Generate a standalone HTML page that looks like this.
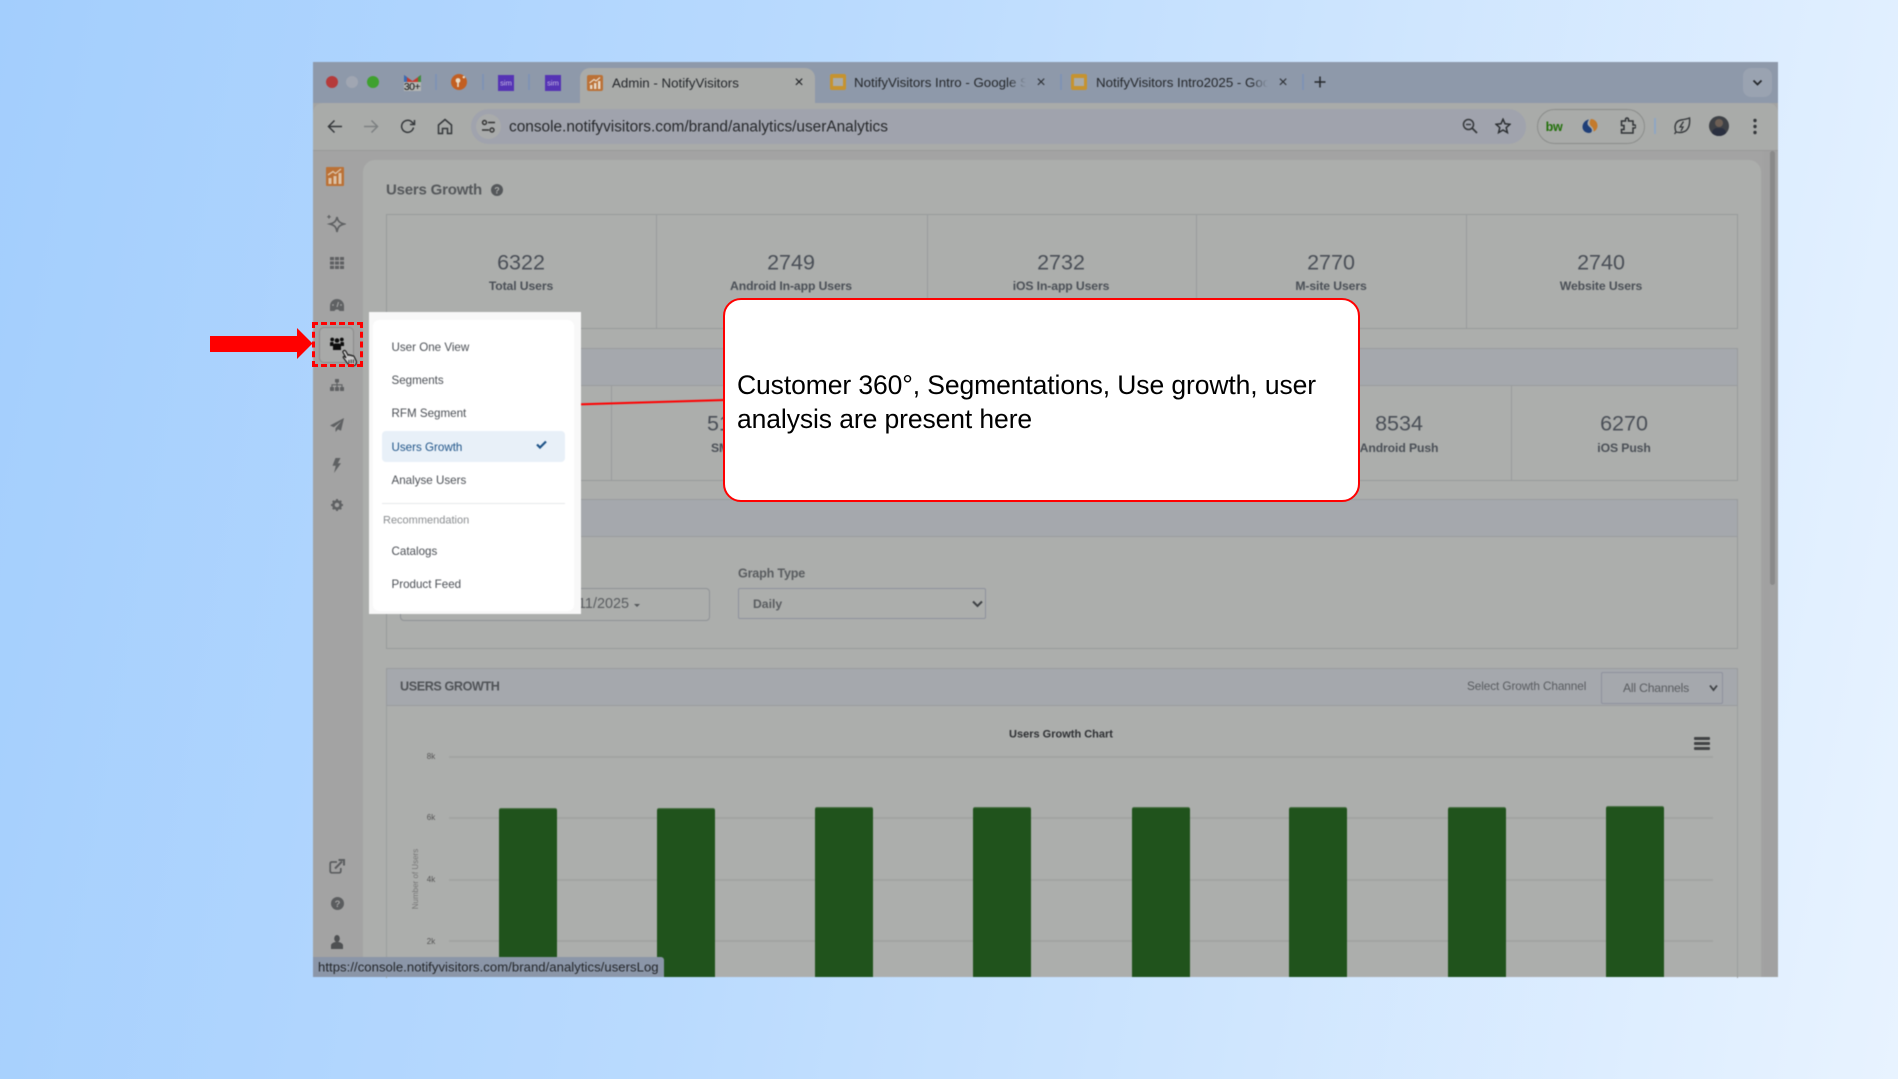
<!DOCTYPE html>
<html lang="en">
<head>
<meta charset="utf-8">
<title>Admin - NotifyVisitors</title>
<style>
html,body{margin:0;padding:0}
body{width:1898px;height:1079px;overflow:hidden;position:relative;background:linear-gradient(100deg,#a3cefd 0%,#b9dafe 40%,#e8f3ff 100%);font-family:"Liberation Sans",sans-serif}
.a{position:absolute}
.t{position:absolute;white-space:nowrap;line-height:1;margin-top:1px}
.c{transform:translate(-50%,-50%)}
.l{transform:translateY(-50%)}
.n{font-size:21.5px;color:#4a4f57}
.s{font-size:12.2px;font-weight:bold;color:#4b5057;letter-spacing:-.1px}
.vl{position:absolute;width:1px;background:#999c9c}
.band{position:absolute;background:#a5a8ad;border:1px solid #999c9f;box-sizing:border-box;border-radius:2px 2px 0 0}
.box{position:absolute;border:1px solid #989b9b;box-sizing:border-box}
.grid{position:absolute;left:449px;width:1264px;height:2px;background:#a2a4a2}
.bar{position:absolute;top:809px;width:58px;height:168px;background:#20531c;border-radius:2px 2px 0 0;box-shadow:0 -1px 0 #4d7349}
.yl{font-size:8px;color:#555}
.mi{font-size:11.6px;color:#4b4f55;left:391.5px}
.sep{position:absolute;width:2px;height:16px;top:74px;background:#7f93b5}
.tt{font-size:13.3px;color:#24272b}
.fv{position:absolute;width:16px;height:16px;top:74px;background:#c6932f;border-radius:2px}
.fv:after{content:"";position:absolute;left:3px;top:4px;width:10px;height:8px;background:#a9aba9}
#soft{position:absolute;left:0;top:0;width:1898px;height:1079px;filter:blur(.45px)}
</style>
</head>
<body>
<div id="soft">
<!-- browser window -->
<div class="a" style="left:313px;top:62px;width:1465px;height:915px;background:#a3a3a3;overflow:hidden"></div>
<div class="a" style="left:313px;top:62px;width:1465px;height:41px;background:#8e99aa"></div>
<div class="a" style="left:313px;top:103px;width:1465px;height:47px;background:#a9aba9;border-radius:10px 10px 0 0;border-bottom:1px solid #999"></div>

<!-- traffic lights -->
<div class="a" style="left:326px;top:76px;width:12px;height:12px;border-radius:50%;background:#b53b3b"></div>
<div class="a" style="left:346px;top:76px;width:12px;height:12px;border-radius:50%;background:#a0a6b2"></div>
<div class="a" style="left:367px;top:76px;width:12px;height:12px;border-radius:50%;background:#3fa12f"></div>

<!-- pinned tabs -->
<svg class="a" style="left:404px;top:74px" width="17" height="17" viewBox="0 0 17 17"><path d="M0 1 L8.5 7 L17 1 V9 H0Z" fill="#c53a2e"/><path d="M0 1V9H3V3Z" fill="#3a6bb5"/><path d="M17 1V9H14V3Z" fill="#3f8f3f"/><rect x="0" y="8" width="17" height="9" fill="#b4b6b4"/></svg>
<div class="t c" style="left:412px;top:86px;font-size:10.5px;color:#111;letter-spacing:-.5px">30+</div>
<div class="sep" style="left:435px"></div>
<svg class="a" style="left:451px;top:74px" width="16" height="16" viewBox="0 0 16 16"><circle cx="8" cy="8" r="8" fill="#c25f22"/><circle cx="7" cy="6.5" r="2.4" fill="#e8dcc8"/><rect x="6.2" y="8" width="1.6" height="5" fill="#e8dcc8"/><circle cx="12.8" cy="3.2" r="1.2" fill="#e8dcc8"/></svg>
<div class="sep" style="left:482px"></div>
<div class="a" style="left:498px;top:75px;width:16px;height:16px;background:#5533b5"></div>
<div class="t c" style="left:506px;top:82px;font-size:7.5px;color:#c9bfe6">sim</div>
<div class="sep" style="left:528px"></div>
<div class="a" style="left:545px;top:75px;width:16px;height:16px;background:#5533b5"></div>
<div class="t c" style="left:553px;top:82px;font-size:7.5px;color:#c9bfe6">sim</div>

<!-- active tab -->
<div class="a" style="left:580px;top:68px;width:235px;height:36px;background:#a9aba9;border-radius:10px 10px 0 0"></div>
<svg class="a" style="left:587px;top:75px" width="16" height="16" viewBox="0 0 16 16"><rect width="16" height="16" rx="2" fill="#bb7136"/><rect x="3" y="10" width="2.4" height="4" fill="#e8d9c8"/><rect x="7" y="8" width="2.4" height="6" fill="#e8d9c8"/><rect x="11" y="6" width="2.4" height="8" fill="#e8d9c8"/><path d="M2.5 8 L7 4.5 L9 6 L13 2.5" fill="none" stroke="#e8d9c8" stroke-width="1.2"/></svg>
<div class="t tt l" style="left:612px;top:81.5px">Admin - NotifyVisitors</div>
<div class="t c" style="left:799px;top:82px;font-size:16px;color:#1c1e22">×</div>

<!-- tab 2 -->
<div class="fv" style="left:830px"></div>
<div class="a" style="left:854px;top:72px;width:172px;height:20px;overflow:hidden;-webkit-mask-image:linear-gradient(to right,#000 90%,transparent)"><div class="t tt" style="left:0;top:3px">NotifyVisitors Intro - Google Slides</div></div>
<div class="t c" style="left:1041px;top:82px;font-size:16px;color:#2b2e33">×</div>
<div class="sep" style="left:1060px"></div>

<!-- tab 3 -->
<div class="fv" style="left:1071px"></div>
<div class="a" style="left:1096px;top:72px;width:172px;height:20px;overflow:hidden;-webkit-mask-image:linear-gradient(to right,#000 90%,transparent)"><div class="t tt" style="left:0;top:3px">NotifyVisitors Intro2025 - Google Slides</div></div>
<div class="t c" style="left:1283px;top:82px;font-size:16px;color:#2b2e33">×</div>
<div class="sep" style="left:1302px"></div>
<svg class="a" style="left:1314px;top:76px" width="12" height="12" viewBox="0 0 12 12"><path d="M6 0.5V11.5M0.5 6H11.5" stroke="#24272b" stroke-width="1.5"/></svg>
<div class="a" style="left:1743px;top:68px;width:29px;height:29px;background:#9aa3b1;border-radius:8px"></div>
<svg class="a" style="left:1752px;top:79px" width="11" height="8" viewBox="0 0 11 8"><path d="M1.5 1.5L5.5 5.5L9.5 1.5" fill="none" stroke="#24272b" stroke-width="1.8"/></svg>

<!-- toolbar -->
<svg class="a" style="left:327px;top:119px" width="16" height="15" viewBox="0 0 16 15"><path d="M15 7.5H2M7.5 1.5L1.5 7.5L7.5 13.5" fill="none" stroke="#34373a" stroke-width="1.5"/></svg>
<svg class="a" style="left:363px;top:119px" width="16" height="15" viewBox="0 0 16 15"><path d="M1 7.5H14M8.5 1.5L14.5 7.5L8.5 13.5" fill="none" stroke="#7d8082" stroke-width="1.5"/></svg>
<svg class="a" style="left:400px;top:119px" width="16" height="15" viewBox="0 0 16 15"><path d="M13.5 8.5A6 6 0 1 1 12 3.2L14 5" fill="none" stroke="#34373a" stroke-width="1.5"/><path d="M14.5 1V5.5H10" fill="none" stroke="#34373a" stroke-width="1.5"/></svg>
<svg class="a" style="left:437px;top:118px" width="16" height="17" viewBox="0 0 16 17"><path d="M1.5 7L8 1.5L14.5 7V15.5H10.5V10.5H5.5V15.5H1.5Z" fill="none" stroke="#34373a" stroke-width="1.5"/></svg>
<div class="a" style="left:471px;top:109px;width:1055px;height:35px;background:#a0a3ad;border-radius:18px"></div>
<div class="a" style="left:476px;top:114px;width:25px;height:25px;background:#a9abab;border-radius:50%"></div>
<svg class="a" style="left:481px;top:119px" width="15" height="15" viewBox="0 0 15 15"><circle cx="3.5" cy="3.5" r="2" fill="none" stroke="#333" stroke-width="1.4"/><path d="M7 3.5H14M1 11H8" stroke="#333" stroke-width="1.4"/><circle cx="11" cy="11" r="2" fill="none" stroke="#333" stroke-width="1.4"/></svg>
<div class="t l" style="left:509px;top:126px;font-size:15.4px;color:#26282b">console.notifyvisitors.com/brand/analytics/userAnalytics</div>
<svg class="a" style="left:1462px;top:118px" width="16" height="16" viewBox="0 0 16 16"><circle cx="6.5" cy="6.5" r="5" fill="none" stroke="#34373a" stroke-width="1.5"/><path d="M10 10L15 15" stroke="#34373a" stroke-width="1.8"/><path d="M4 6.5H9" stroke="#34373a" stroke-width="1.4"/></svg>
<svg class="a" style="left:1495px;top:118px" width="16" height="16" viewBox="0 0 16 16"><path d="M8 1.2L10 5.8L15 6.3L11.2 9.6L12.4 14.6L8 12L3.6 14.6L4.8 9.6L1 6.3L6 5.8Z" fill="none" stroke="#2c2f32" stroke-width="1.5"/></svg>
<div class="a" style="left:1537px;top:109px;width:108px;height:35px;border:1px solid #8b8d8b;border-radius:18px;box-sizing:border-box"></div>
<div class="t c" style="left:1554px;top:126px;font-size:12.5px;font-weight:bold;color:#22700a;letter-spacing:-.3px">bw</div>
<svg class="a" style="left:1582px;top:118px" width="16" height="16" viewBox="0 0 16 16"><path d="M7 1.5C3.5 2 0.5 5 0.5 9C0.5 12.5 3.5 15 7 15C9.5 15 10.5 13 9.5 11C8.5 9 5.5 8 5.5 5.5C5.5 4 6 2.8 7 1.5Z" fill="#1f3f78"/><path d="M9 1C12.5 1 15.5 4 15.5 7.5C15.5 11 13.5 13 11.5 13.5C12 10.5 10 9 8.5 7.5C7.2 6 7.5 2.5 9 1Z" fill="#c47a2c"/></svg>
<svg class="a" style="left:1620px;top:117px" width="16" height="18" viewBox="0 0 16 18"><path d="M1.5 4H5.5V2.5A1.5 1.5 0 0 1 8.5 2.5V4H13V8H14.5A1.5 1.5 0 0 1 14.5 11H13V16H1.5V12.5H4V8.5H1.5Z" fill="none" stroke="#2f3235" stroke-width="1.5"/></svg>
<div class="a" style="left:1654px;top:118px;width:2px;height:16px;background:#8fa6c3"></div>
<svg class="a" style="left:1673px;top:117px" width="18" height="18" viewBox="0 0 18 18"><path d="M3 15C1 10 2 4 8 3C11 2.5 14 2 16.5 1C17 6 16.5 11 12.5 14C9 16 5 15.5 3 15ZM3 15L1.5 17" fill="none" stroke="#34373a" stroke-width="1.4"/><path d="M10.5 4.5L7 10H10L8 14" fill="none" stroke="#34373a" stroke-width="1.3"/></svg>
<div class="a" style="left:1709px;top:116px;width:20px;height:20px;border-radius:50%;background:#3e4146;overflow:hidden"><div class="a" style="left:6px;top:3px;width:8px;height:8px;border-radius:50%;background:#6d5f55"></div><div class="a" style="left:3px;top:12px;width:14px;height:10px;border-radius:5px 5px 0 0;background:#2a3040"></div></div>
<svg class="a" style="left:1752px;top:118px" width="6" height="17" viewBox="0 0 6 17"><circle cx="3" cy="2.5" r="1.7" fill="#34373a"/><circle cx="3" cy="8.5" r="1.7" fill="#34373a"/><circle cx="3" cy="14.5" r="1.7" fill="#34373a"/></svg>

<!-- scrollbar -->
<div class="a" style="left:1763px;top:151px;width:15px;height:826px;background:#a1a1a1"></div>
<div class="a" style="left:1770px;top:151px;width:5px;height:434px;background:#8a8a8a;border-radius:3px"></div>

<!-- main panel -->
<div class="a" style="left:363px;top:160px;width:1398px;height:817px;background:#acaeac;border-radius:12px 12px 0 0"></div>

<!-- sidebar icons -->
<svg class="a" style="left:326px;top:167px" width="18" height="19" viewBox="0 0 18 19"><rect width="18" height="19" rx="1" fill="#bb7136"/><rect x="2.5" y="11" width="3" height="6" fill="#dcc2a6"/><rect x="7.5" y="9" width="3" height="8" fill="#dcc2a6"/><rect x="12.5" y="6" width="3" height="11" fill="#dcc2a6"/><path d="M2 8L7 4.5L9.5 6.5L15 2" fill="none" stroke="#dcc2a6" stroke-width="1.4"/></svg>
<svg class="a" style="left:326px;top:214px" width="20" height="19" viewBox="0 0 20 19"><path d="M11 3C11.7 7 13.5 8.8 18 10C13.5 11.2 11.7 13 11 18C10.3 13 8.5 11.2 4 10C8.5 8.8 10.3 7 11 3Z" fill="none" stroke="#5f6163" stroke-width="1.7"/><path d="M3 1V4.6M1.2 2.8H4.8" stroke="#5f6163" stroke-width="1.2"/></svg>
<svg class="a" style="left:329.5px;top:257px" width="14" height="12" viewBox="0 0 14 12"><g fill="#5f6163"><rect width="4" height="3.2"/><rect x="5" width="4" height="3.2"/><rect x="10" width="4" height="3.2"/><rect y="4.4" width="4" height="3.2"/><rect x="5" y="4.4" width="4" height="3.2"/><rect x="10" y="4.4" width="4" height="3.2"/><rect y="8.8" width="4" height="3.2"/><rect x="5" y="8.8" width="4" height="3.2"/><rect x="10" y="8.8" width="4" height="3.2"/></g></svg>
<svg class="a" style="left:329.5px;top:299px" width="14" height="12" viewBox="0 0 14 12"><path d="M0 12V7A7 7 0 0 1 14 7V12H9.5A2.7 2.7 0 0 0 4.5 12Z" fill="#5f6163"/><path d="M7 8L8.5 3" stroke="#a3a3a3" stroke-width="1.2"/><circle cx="3" cy="6" r=".9" fill="#a3a3a3"/><circle cx="11" cy="6" r=".9" fill="#a3a3a3"/></svg>

<!-- hovered item -->
<div class="a" style="left:319px;top:327px;width:35px;height:36px;background:#a8a9a8;border:1px solid #8a8a8a;border-radius:5px;box-sizing:border-box"></div>
<svg class="a" style="left:329.5px;top:337px" width="14" height="14" viewBox="0 0 14 14"><g fill="#0d0d0d"><circle cx="2.2" cy="2.5" r="1.9"/><circle cx="11.8" cy="2.5" r="1.9"/><circle cx="7" cy="3.5" r="2.3"/><path d="M0 9V6C0 5 1 5 2 5H3.5V9Z"/><path d="M14 9V6C14 5 13 5 12 5H10.5V9Z"/><path d="M3 13V8.5C3 7 4 6.5 5 6.5H9C10 6.5 11 7 11 8.5V13Z"/></g></svg>
<svg class="a" style="left:341px;top:349px" width="17" height="18" viewBox="0 0 17 18"><path d="M2.5 1.8C3.4 1 4.4 1.4 5 2.5L7 6.2C7.5 5.6 8.6 5.6 9 6.4C9.5 5.9 10.6 6 11 6.9C11.6 6.5 12.8 6.8 13.2 7.8L15.2 12C16 14.5 14.5 17 11.5 17C9 17 7.6 16 6.5 14.3L2.4 8.8C1.8 8 2.6 7.1 3.5 7.6L5 8.8L2 3.4C1.7 2.8 2 2.2 2.5 1.8Z" fill="#c9c9c9" stroke="#1d1d1d" stroke-width="1.2"/><path d="M8 11V14.5M10.2 10.5V14.5M12.4 10.5V14.5" stroke="#1d1d1d" stroke-width=".9"/></svg>

<svg class="a" style="left:329.5px;top:379px" width="14" height="12" viewBox="0 0 14 12"><g fill="#5f6163"><rect x="5" width="4" height="3.5" rx=".5"/><rect y="8" width="4" height="4" rx=".5"/><rect x="5" y="8" width="4" height="4" rx=".5"/><rect x="10" y="8" width="4" height="4" rx=".5"/></g><path d="M7 3.5V8M2 8V5.8H12V8" fill="none" stroke="#5f6163" stroke-width="1.1"/></svg>
<svg class="a" style="left:330px;top:418px" width="14" height="14" viewBox="0 0 14 14"><path d="M14 0L0 7.5L3.8 9.3L11.5 3L5.5 10.2V14L8 11.2L11 12.8Z" fill="#5f6163"/></svg>
<svg class="a" style="left:332px;top:458px" width="9" height="15" viewBox="0 0 9 15"><path d="M3.5 0H8.5L5.8 5.2H9L2 15L3.8 7.8H0.5Z" fill="#5f6163"/></svg>
<svg class="a" style="left:330.5px;top:499px" width="12" height="12" viewBox="0 0 12 12"><circle cx="6" cy="6" r="3.6" fill="none" stroke="#5f6163" stroke-width="2.6"/><path d="M6 0V2.2M6 9.8V12M0 6H2.2M9.8 6H12M1.8 1.8L3.3 3.3M8.7 8.7L10.2 10.2M1.8 10.2L3.3 8.7M8.7 3.3L10.2 1.8" stroke="#5f6163" stroke-width="2"/></svg>
<svg class="a" style="left:329px;top:859px" width="16" height="15" viewBox="0 0 16 15"><path d="M8 3H3C1.8 3 1.2 3.6 1.2 4.8V12C1.2 13.2 1.8 13.8 3 13.8H10C11.2 13.8 11.8 13.2 11.8 12V9" fill="none" stroke="#5b5d5f" stroke-width="1.7"/><path d="M6 9.5L13 2.5M9.5 1H15V6.5" fill="none" stroke="#5b5d5f" stroke-width="2"/></svg>
<svg class="a" style="left:330.5px;top:897px" width="13" height="13" viewBox="0 0 13 13"><circle cx="6.5" cy="6.5" r="6.5" fill="#5b5d5f"/><text x="6.5" y="10" text-anchor="middle" font-family="Liberation Sans" font-weight="bold" font-size="9.5" fill="#a3a3a3">?</text></svg>
<svg class="a" style="left:330.5px;top:935px" width="12" height="14" viewBox="0 0 12 14"><ellipse cx="6" cy="3.6" rx="2.8" ry="3.6" fill="#4f5153"/><path d="M0 14V10.5C0 8.5 2.5 7.5 4 7H8C9.5 7.5 12 8.5 12 10.5V14Z" fill="#4f5153"/></svg>

<!-- title -->
<div class="t l" style="left:386px;top:188.5px;font-size:15px;font-weight:bold;color:#55585b;letter-spacing:-.2px">Users Growth</div>
<svg class="a" style="left:491px;top:184px" width="12" height="12" viewBox="0 0 12 12"><circle cx="6" cy="6" r="6" fill="#55585b"/><text x="6" y="9.5" text-anchor="middle" font-family="Liberation Sans" font-weight="bold" font-size="9" fill="#acaeac">?</text></svg>

<!-- stats row 1 -->
<div class="box" style="left:386px;top:214px;width:1352px;height:115px"></div>
<div class="vl" style="left:656px;top:214px;height:114px"></div>
<div class="vl" style="left:927px;top:214px;height:114px"></div>
<div class="vl" style="left:1196px;top:214px;height:114px"></div>
<div class="vl" style="left:1466px;top:214px;height:114px"></div>
<div class="t n c" style="left:521px;top:262px">6322</div><div class="t s c" style="left:521px;top:285px">Total Users</div>
<div class="t n c" style="left:791px;top:262px">2749</div><div class="t s c" style="left:791px;top:285px">Android In-app Users</div>
<div class="t n c" style="left:1061px;top:262px">2732</div><div class="t s c" style="left:1061px;top:285px">iOS In-app Users</div>
<div class="t n c" style="left:1331px;top:262px">2770</div><div class="t s c" style="left:1331px;top:285px">M-site Users</div>
<div class="t n c" style="left:1601px;top:262px">2740</div><div class="t s c" style="left:1601px;top:285px">Website Users</div>

<!-- stats row 2 -->
<div class="box" style="left:386px;top:348px;width:1352px;height:133px"></div>
<div class="band" style="left:386px;top:348px;width:1352px;height:38px"></div>
<div class="vl" style="left:611px;top:386px;height:94px"></div>
<div class="vl" style="left:1511px;top:386px;height:94px"></div>
<div class="t n l" style="left:707px;top:423px">51</div><div class="t s l" style="left:711px;top:447px">SM</div>
<div class="t n c" style="left:1399px;top:423px">8534</div><div class="t s c" style="left:1399px;top:447px">Android Push</div>
<div class="t n c" style="left:1624px;top:423px">6270</div><div class="t s c" style="left:1624px;top:447px">iOS Push</div>

<!-- filter section -->
<div class="box" style="left:386px;top:499px;width:1352px;height:150px"></div>
<div class="band" style="left:386px;top:499px;width:1352px;height:38px"></div>
<div class="a" style="left:400px;top:588px;width:310px;height:33px;border:1px solid #8f9296;border-radius:4px;box-sizing:border-box"></div>
<div class="t l" style="left:566px;top:603px;font-size:14.4px;color:#5a5d60">3/11/2025</div>
<div class="a" style="left:634px;top:604px;width:0;height:0;border-left:3px solid transparent;border-right:3px solid transparent;border-top:3px solid #55585b"></div>
<div class="t l" style="left:738px;top:573px;font-size:12.6px;font-weight:bold;color:#5a5d60;letter-spacing:-.2px">Graph Type</div>
<div class="a" style="left:738px;top:588px;width:248px;height:31px;border:1px solid #8e919d;border-radius:2px;box-sizing:border-box"></div>
<div class="t l" style="left:753px;top:603px;font-size:12.2px;font-weight:bold;color:#5a5d60">Daily</div>
<svg class="a" style="left:972px;top:600px" width="11" height="8" viewBox="0 0 11 8"><path d="M1 1.5L5.5 6L10 1.5" fill="none" stroke="#3f4245" stroke-width="2"/></svg>

<!-- users growth section -->
<div class="a" style="left:386px;top:668px;width:1352px;height:310px;border-left:1px solid #9b9e9e;border-right:1px solid #9b9e9e;box-sizing:border-box"></div>
<div class="band" style="left:386px;top:668px;width:1352px;height:38px"></div>
<div class="t l" style="left:400px;top:686px;font-size:12.6px;font-weight:bold;color:#505357;letter-spacing:-.4px">USERS GROWTH</div>
<div class="t l" style="left:1467px;top:686px;font-size:11.8px;color:#595c60;letter-spacing:-.1px">Select Growth Channel</div>
<div class="a" style="left:1601px;top:672px;width:122px;height:32px;border:1px solid #8e919d;border-radius:2px;box-sizing:border-box"></div>
<div class="t l" style="left:1623px;top:687px;font-size:12.2px;color:#595c60;letter-spacing:-.2px">All Channels</div>
<svg class="a" style="left:1709px;top:684px" width="9" height="8" viewBox="0 0 9 8"><path d="M1 1.5L4.5 6L8 1.5" fill="none" stroke="#3f4245" stroke-width="1.8"/></svg>

<div class="t c" style="left:1061px;top:734px;font-size:11px;font-weight:bold;color:#2e3033">Users Growth Chart</div>
<div class="a" style="left:1694px;top:737px;width:16px;height:3px;background:#414345;border-radius:1px"></div>
<div class="a" style="left:1694px;top:742px;width:16px;height:3px;background:#414345;border-radius:1px"></div>
<div class="a" style="left:1694px;top:747px;width:16px;height:3px;background:#414345;border-radius:1px"></div>

<div class="grid" style="top:756px"></div>
<div class="grid" style="top:817px"></div>
<div class="grid" style="top:879px"></div>
<div class="grid" style="top:940px"></div>
<div class="t yl c" style="left:431px;top:756px">8k</div>
<div class="t yl c" style="left:431px;top:817px">6k</div>
<div class="t yl c" style="left:431px;top:879px">4k</div>
<div class="t yl c" style="left:431px;top:941px">2k</div>
<div class="t" style="left:416px;top:878px;font-size:8px;color:#777;transform:translate(-50%,-50%) rotate(-90deg)">Number of Users</div>

<div class="bar" style="left:499px"></div>
<div class="bar" style="left:657px"></div>
<div class="bar" style="left:815px;top:808px;height:169px"></div>
<div class="bar" style="left:973px;top:808px;height:169px"></div>
<div class="bar" style="left:1132px;top:808px;height:169px"></div>
<div class="bar" style="left:1289px;top:808px;height:169px"></div>
<div class="bar" style="left:1448px;top:808px;height:169px"></div>
<div class="bar" style="left:1606px;top:807px;height:170px"></div>

<!-- status tooltip -->
<div class="a" style="left:313px;top:957px;width:351px;height:20px;background:#8b96a8;border-radius:0 3px 0 0"></div>
<div class="t l" style="left:318px;top:966px;font-size:13.1px;color:#23262a;letter-spacing:.05px">https://console.notifyvisitors.com/brand/analytics/usersLog</div>

<!-- connector line -->
<svg class="a" style="left:575px;top:395px" width="155" height="15" viewBox="0 0 155 15"><path d="M0 9.5L150 5" stroke="#f00" stroke-width="2"/></svg>

<!-- dropdown -->
<div class="a" style="left:369px;top:312px;width:212px;height:302px;background:#f8f8f8"></div>
<div class="a" style="left:373px;top:320px;width:201px;height:291px;background:#fff;border-radius:6px"></div>
<div class="t mi l" style="top:347px">User One View</div>
<div class="t mi l" style="top:380px">Segments</div>
<div class="t mi l" style="top:413px">RFM Segment</div>
<div class="a" style="left:382px;top:431px;width:183px;height:31px;background:#e8f0f8;border-radius:4px"></div>
<div class="t mi l" style="top:447px;color:#1f5488">Users Growth</div>
<svg class="a" style="left:536px;top:440px" width="11" height="9" viewBox="0 0 11 9"><path d="M1 4.5L4 7.5L10 1.5" fill="none" stroke="#1f5488" stroke-width="2.2"/></svg>
<div class="t mi l" style="top:480px">Analyse Users</div>
<div class="a" style="left:382px;top:503px;width:183px;height:1px;background:#e6e8ea"></div>
<div class="t l" style="left:383px;top:519.5px;font-size:11px;color:#8a8d90">Recommendation</div>
<div class="t mi l" style="top:550.5px">Catalogs</div>
<div class="t mi l" style="top:584px">Product Feed</div>
</div>

<!-- dashed highlight -->
<div class="a" style="left:312px;top:322px;width:51px;height:45px;box-sizing:border-box;border:3px dashed #f00"></div>

<!-- callout -->
<div class="a" style="left:723px;top:298px;width:637px;height:204px;background:#fff;border:2px solid #f00;border-radius:18px;box-sizing:border-box"></div>
<div class="t l" style="left:737px;top:384px;font-size:26.5px;color:#000;letter-spacing:-.1px">Customer 360°, Segmentations, Use growth, user</div>
<div class="t l" style="left:737px;top:418px;font-size:26.5px;color:#000;letter-spacing:-.1px">analysis are present here</div>

<!-- red arrow -->
<svg class="a" style="left:210px;top:328px" width="103" height="32" viewBox="0 0 103 32"><path d="M0 8H87V0L102.5 15.5L87 31V24H0Z" fill="#f00"/></svg>
</body>
</html>
